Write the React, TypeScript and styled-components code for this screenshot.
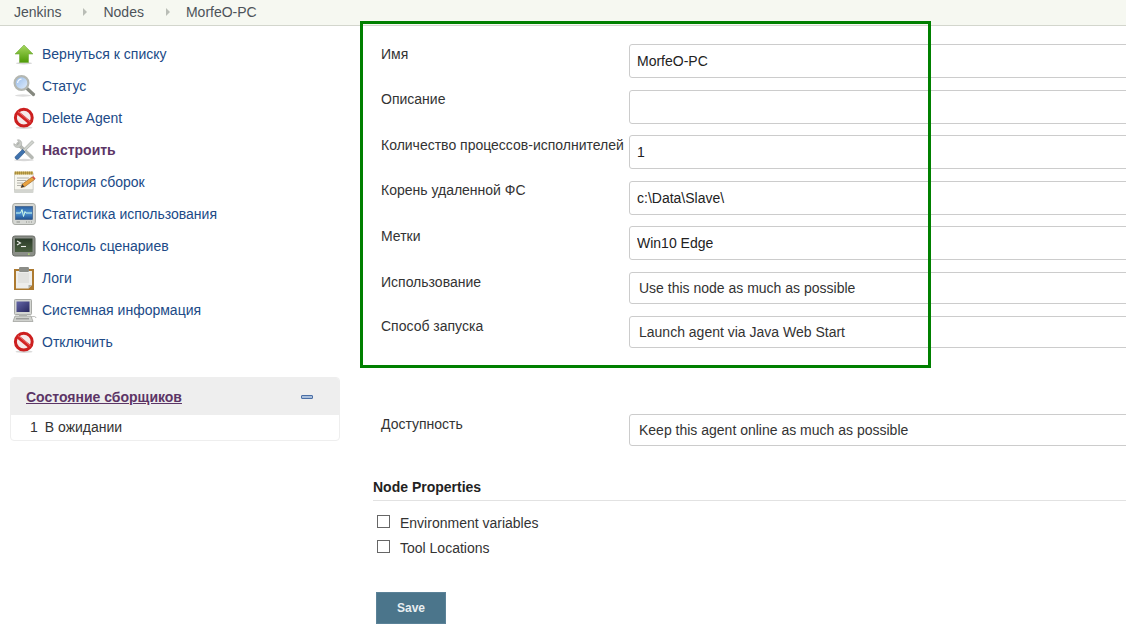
import styled, { createGlobalStyle } from "styled-components";

const GlobalStyle = createGlobalStyle`
  html, body {
    margin: 0;
    padding: 0;
    background: #fff;
    height: 100%;
    overflow: hidden;
  }
  body {
    font-family: "Liberation Sans", Arial, sans-serif;
    font-size: 14px;
    color: #333;
  }
`;

const Page = styled.div`
  position: relative;
  width: 1126px;
  height: 643px;
  overflow: hidden;
`;

const Breadcrumbs = styled.nav`
  display: flex;
  align-items: center;
  height: 24px;
  padding: 0 0 1px 14px;
  background: #f6f8f1;
  border-bottom: 1px solid #d3d6cd;
  font-size: 14px;
`;

const Crumb = styled.span`
  color: #4d5359;
`;

const CrumbArrow = styled.span`
  width: 0;
  height: 0;
  margin: 0 16px 0 22px;
  border-left: 4px solid #b9bdb6;
  border-top: 4px solid transparent;
  border-bottom: 4px solid transparent;
`;

const Columns = styled.div`
  display: flex;
`;

const Sidebar = styled.aside`
  flex: none;
  width: 330px;
  padding: 12px 20px 0 10px;
`;

const TaskList = styled.ul`
  list-style: none;
  margin: 0 0 19px;
  padding: 0;
`;

const Task = styled.li`
  display: flex;
  align-items: center;
  gap: 6px;
  height: 32px;
  padding-left: 2px;
`;

const TaskLink = styled.a<{ $active?: boolean }>`
  color: ${(p) => (p.$active ? "#5c3566" : "#204a87")};
  font-weight: ${(p) => (p.$active ? 700 : 400)};
  text-decoration: none;
`;

const Panel = styled.section`
  border: 1px solid #eee;
  border-radius: 4px;
  overflow: hidden;
`;

const PanelHeader = styled.header`
  display: flex;
  align-items: center;
  justify-content: space-between;
  height: 37px;
  padding: 0 26px 0 15px;
  background: #eee;
`;

const PanelTitle = styled.a`
  color: #5c3566;
  font-weight: 700;
  text-decoration: underline;
`;

const Collapse = styled.span`
  display: block;
  width: 12px;
  height: 4px;
  background: #a9bfdc;
  border: 1px solid #4a6ea5;
  border-radius: 1px;
  box-sizing: border-box;
`;

const PanelRow = styled.div`
  display: flex;
  align-items: center;
  height: 25px;
  padding: 0 0 2px 19px;
  box-sizing: border-box;
  gap: 7px;
  color: #333;
`;

const Main = styled.main`
  flex: 1;
  min-width: 0;
  padding: 18px 0 0 21px;
  overflow: hidden;
`;

const Row = styled.div<{ $gap?: number }>`
  display: flex;
  align-items: flex-start;
  margin-bottom: ${(p) => p.$gap ?? 11.5}px;
`;

const FieldLabel = styled.label`
  flex: none;
  width: 248px;
  padding-top: 0.6px;
  line-height: 18px;
  color: #333;
  white-space: nowrap;
`;

const SelectLabel = styled(FieldLabel)`
  padding-top: 1px;
`;

const TextInput = styled.input`
  flex: none;
  box-sizing: border-box;
  width: 700px;
  height: 34px;
  padding: 0 7px;
  background: #fff;
  border: 1px solid #ccc;
  border-radius: 3px;
  color: #222;
  font: 14px "Liberation Sans", Arial, sans-serif;
  outline: none;
`;

const Select = styled.select`
  flex: none;
  box-sizing: border-box;
  width: 700px;
  height: 32px;
  padding: 0 9px;
  appearance: none;
  background: #fff;
  border: 1px solid #ccc;
  border-radius: 3px;
  color: #333;
  font: 14px "Liberation Sans", Arial, sans-serif;
  outline: none;
`;

const SectionTitle = styled.h3`
  margin: 33px 0 0 -8px;
  padding-bottom: 5px;
  border-bottom: 1px solid #e2e2e2;
  color: #222;
  font-size: 14px;
  font-weight: 700;
  line-height: 16px;
`;

const Checks = styled.div`
  display: flex;
  flex-direction: column;
  gap: 5px;
  margin: 12px 0 0 -4px;
`;

const CheckRow = styled.label`
  display: flex;
  align-items: center;
  gap: 10px;
  height: 20px;
  color: #333;
`;

const Checkbox = styled.input`
  appearance: none;
  box-sizing: border-box;
  width: 13px;
  height: 13px;
  margin: 0 0 3px;
  background: #fff;
  border: 1px solid #666;
`;

const SaveButton = styled.button`
  display: block;
  box-sizing: border-box;
  width: 70px;
  height: 32px;
  margin: 34px 0 0 -5px;
  background: #4b758b;
  border: 1px solid #5b8298;
  color: #e8eef1;
  font: 700 12px "Liberation Sans", Arial, sans-serif;
`;

const Highlight = styled.div`
  position: absolute;
  left: 360px;
  top: 21px;
  box-sizing: border-box;
  width: 571px;
  height: 347px;
  border: 3px solid #008000;
  pointer-events: none;
`;

const Glyph = styled.svg`
  display: block;
  flex: none;
  width: 24px;
  height: 24px;
  overflow: visible;
`;

function UpIcon() {
  return (
    <Glyph viewBox="0 0 24 24">
      <defs>
        <linearGradient id="up" x1="0" y1="0" x2="0" y2="1">
          <stop offset="0" stopColor="#a6d85f" />
          <stop offset="1" stopColor="#4e9a06" />
        </linearGradient>
      </defs>
      <ellipse cx="12" cy="21.3" rx="8" ry="1.1" fill="#c4c4c4" opacity="0.7" />
      <path d="M12 3 21 12H16.5V20.5H7.5V12H3Z" fill="url(#up)" stroke="#74ab3c" strokeWidth="0.6" />
    </Glyph>
  );
}

function SearchIcon() {
  return (
    <Glyph viewBox="0 0 24 24">
      <defs>
        <linearGradient id="lens" x1="0" y1="0" x2="1" y2="1">
          <stop offset="0" stopColor="#8fb7ea" />
          <stop offset="1" stopColor="#e6f0fb" />
        </linearGradient>
      </defs>
      <ellipse cx="11" cy="21.5" rx="8" ry="1.2" fill="#ddd" />
      <path d="M15 14.5 21.5 20.5" stroke="#85887f" strokeWidth="3.2" strokeLinecap="round" />
      <circle cx="9.5" cy="9" r="6.9" fill="url(#lens)" stroke="#b4b7b1" strokeWidth="2.2" />
      <path d="M5.6 9A3.9 3.9 0 0 1 9.5 5.1" stroke="#f2f7fd" strokeWidth="1.2" fill="none" />
    </Glyph>
  );
}

function StopIcon() {
  return (
    <Glyph viewBox="0 0 24 24">
      <ellipse cx="12" cy="21.7" rx="8.5" ry="1.3" fill="#c9c9c9" opacity="0.7" />
      <circle cx="11.8" cy="11.7" r="8.4" fill="#f6eaea" stroke="#cc1f1f" strokeWidth="3" />
      <path d="M5.6 6.6 18 16.8" stroke="#d32424" strokeWidth="3.6" />
      <path d="M6 5.5 18.6 16" stroke="#ee8a8a" strokeWidth="0.7" />
    </Glyph>
  );
}

function ToolsIcon() {
  return (
    <Glyph viewBox="0 0 24 24">
      <ellipse cx="12" cy="22" rx="10" ry="1.2" fill="#d8d8d8" />
      <path d="M6 6 20 19.5" stroke="#b6b9b4" strokeWidth="3.6" strokeLinecap="round" />
      <path d="M1.8 5.5 5 7.4 7.2 5 5.4 1.8C6.8 1.4 9 2 9.6 4.4 10.1 6.6 9.2 8.4 7.6 9.2 4.4 10.4 1.4 8.4 1.8 5.5Z" fill="#c8cbc6" stroke="#9a9d98" strokeWidth="0.5" />
      <path d="M20 2.5 22 4.5 12.5 13.5 10.8 11.8Z" fill="#d0d3ce" stroke="#8e928c" strokeWidth="0.5" />
      <path d="M10.5 11.5 13 14 6.4 21C5 22.4 2 20 3.4 18.4Z" fill="#3f72ad" stroke="#2a5488" strokeWidth="0.6" />
    </Glyph>
  );
}

function NotepadIcon() {
  return (
    <Glyph viewBox="0 0 24 24">
      <rect x="2" y="2.5" width="19.5" height="20.5" rx="1" fill="#d3d5d0" />
      <rect x="2.6" y="3" width="18.4" height="16.8" fill="#f7f6ee" stroke="#bfbfb6" strokeWidth="0.5" />
      <rect x="2.5" y="1.5" width="18.5" height="3" fill="#c9a94e" />
      <path d="M3.5 1.5V4.5M5.5 1.5V4.5M7.5 1.5V4.5M9.5 1.5V4.5M11.5 1.5V4.5M13.5 1.5V4.5M15.5 1.5V4.5M17.5 1.5V4.5M19.5 1.5V4.5" stroke="#8f7a36" strokeWidth="0.6" />
      <path d="M5 8H17M5 10.5H14M5 13H11M5 15.5H9" stroke="#a9a9a0" strokeWidth="0.9" />
      <path d="M9 17.5 10.2 14.2 20 7 22.6 9.5 12.6 16.8Z" fill="#eba33f" stroke="#8f5a1c" strokeWidth="0.6" />
      <path d="M20 7 22.6 9.5 23.6 8.5 21.2 6Z" fill="#d9534a" />
      <path d="M9 17.5 10.2 14.2 12.6 16.8Z" fill="#3a3a3a" />
    </Glyph>
  );
}

function MonitorIcon() {
  return (
    <Glyph viewBox="0 0 24 24">
      <defs>
        <linearGradient id="scope" x1="0" y1="0" x2="0" y2="1">
          <stop offset="0" stopColor="#2b5f9f" />
          <stop offset="0.5" stopColor="#4d93d6" />
          <stop offset="1" stopColor="#1f4f8c" />
        </linearGradient>
      </defs>
      <rect x="0.7" y="1.5" width="22.6" height="21" rx="2.4" fill="#d6d8d4" stroke="#a8aba6" />
      <rect x="3.5" y="4.5" width="17" height="13" fill="url(#scope)" stroke="#2d4f7c" strokeWidth="0.6" />
      <path d="M4 11H8.5L10 7.5 11.5 14.5 13 9.5 14 11H20" fill="none" stroke="#d0fbe8" strokeWidth="1" />
      <path d="M4.5 20H8M14 20H15M16.5 20H17.5M19 20H20" stroke="#8d908b" strokeWidth="1" />
    </Glyph>
  );
}

function TerminalIcon() {
  return (
    <Glyph viewBox="0 0 24 24">
      <defs>
        <linearGradient id="shell" x1="0" y1="0" x2="0" y2="1">
          <stop offset="0" stopColor="#2a3a28" />
          <stop offset="1" stopColor="#4a5f40" />
        </linearGradient>
      </defs>
      <rect x="0.5" y="2" width="22.5" height="20" rx="2.4" fill="#8b8f88" stroke="#696c66" />
      <rect x="3" y="4.5" width="17.5" height="13.5" fill="url(#shell)" />
      <path d="M5 7 8.5 9 5 11" fill="none" stroke="#eeeeec" strokeWidth="1.1" />
      <path d="M9 12.5H14" stroke="#eeeeec" strokeWidth="1.1" />
      <rect x="16" y="19.5" width="1.6" height="1.3" fill="#b6e06a" />
    </Glyph>
  );
}

function ClipboardIcon() {
  return (
    <Glyph viewBox="0 0 24 24">
      <rect x="2" y="3" width="20" height="21" fill="#ad7a30" />
      <path d="M4 5H20V19L16.5 22.5H4Z" fill="#ededeb" />
      <path d="M6 7H17V17H6Z" fill="#e2e2df" />
      <path d="M20 19H16.5V22.5Z" fill="#aeb0ab" />
      <rect x="7" y="1" width="10" height="5" rx="1.2" fill="#8b8d88" />
    </Glyph>
  );
}

function ComputerIcon() {
  return (
    <Glyph viewBox="0 0 24 24">
      <defs>
        <linearGradient id="crt" x1="0" y1="0" x2="1" y2="1">
          <stop offset="0" stopColor="#6466a8" />
          <stop offset="1" stopColor="#28285e" />
        </linearGradient>
      </defs>
      <rect x="2.5" y="1.5" width="17" height="15" rx="0.8" fill="#d4d6d2" stroke="#a8aaa6" />
      <rect x="4.5" y="3.5" width="13" height="10.5" fill="url(#crt)" />
      <rect x="7" y="16.5" width="8" height="1.5" fill="#bcbebb" />
      <path d="M3 18H19L21 23.5H1Z" fill="#cfd1cd" stroke="#999b97" strokeWidth="0.7" />
      <path d="M4 20.8H17" stroke="#858783" strokeWidth="1" />
      <path d="M19 19C22 18 24 18.5 24 20" stroke="#a8aaa6" strokeWidth="0.8" fill="none" />
    </Glyph>
  );
}

const tasks = [
  { label: "Вернуться к списку", icon: <UpIcon /> },
  { label: "Статус", icon: <SearchIcon /> },
  { label: "Delete Agent", icon: <StopIcon /> },
  { label: "Настроить", icon: <ToolsIcon />, active: true },
  { label: "История сборок", icon: <NotepadIcon /> },
  { label: "Статистика использования", icon: <MonitorIcon /> },
  { label: "Консоль сценариев", icon: <TerminalIcon /> },
  { label: "Логи", icon: <ClipboardIcon /> },
  { label: "Системная информация", icon: <ComputerIcon /> },
  { label: "Отключить", icon: <StopIcon /> },
];

const fields = [
  { label: "Имя", value: "MorfeO-PC" },
  { label: "Описание", value: "" },
  { label: "Количество процессов-исполнителей", value: "1" },
  { label: "Корень удаленной ФС", value: "c:\\Data\\Slave\\" },
  { label: "Метки", value: "Win10 Edge" },
];

function App() {
  return (
    <Page>
      <GlobalStyle />
      <Breadcrumbs>
        <Crumb>Jenkins</Crumb>
        <CrumbArrow />
        <Crumb>Nodes</Crumb>
        <CrumbArrow />
        <Crumb>MorfeO-PC</Crumb>
      </Breadcrumbs>
      <Columns>
        <Sidebar>
          <TaskList>
            {tasks.map((task) => (
              <Task key={task.label}>
                {task.icon}
                <TaskLink href="#" $active={task.active}>
                  {task.label}
                </TaskLink>
              </Task>
            ))}
          </TaskList>
          <Panel>
            <PanelHeader>
              <PanelTitle href="#">Состояние сборщиков</PanelTitle>
              <Collapse />
            </PanelHeader>
            <PanelRow>
              <span>1</span>
              <span>В ожидании</span>
            </PanelRow>
          </Panel>
        </Sidebar>
        <Main>
          {fields.map((field) => (
            <Row key={field.label}>
              <FieldLabel>{field.label}</FieldLabel>
              <TextInput readOnly value={field.value} />
            </Row>
          ))}
          <Row $gap={12}>
            <SelectLabel>Использование</SelectLabel>
            <Select defaultValue="a">
              <option value="a">Use this node as much as possible</option>
            </Select>
          </Row>
          <Row $gap={66}>
            <SelectLabel>Способ запуска</SelectLabel>
            <Select defaultValue="a">
              <option value="a">Launch agent via Java Web Start</option>
            </Select>
          </Row>
          <Row $gap={0}>
            <SelectLabel>Доступность</SelectLabel>
            <Select defaultValue="a">
              <option value="a">Keep this agent online as much as possible</option>
            </Select>
          </Row>
          <SectionTitle>Node Properties</SectionTitle>
          <Checks>
            <CheckRow>
              <Checkbox type="checkbox" />
              Environment variables
            </CheckRow>
            <CheckRow>
              <Checkbox type="checkbox" />
              Tool Locations
            </CheckRow>
          </Checks>
          <SaveButton>Save</SaveButton>
        </Main>
      </Columns>
      <Highlight />
    </Page>
  );
}

export default App;
